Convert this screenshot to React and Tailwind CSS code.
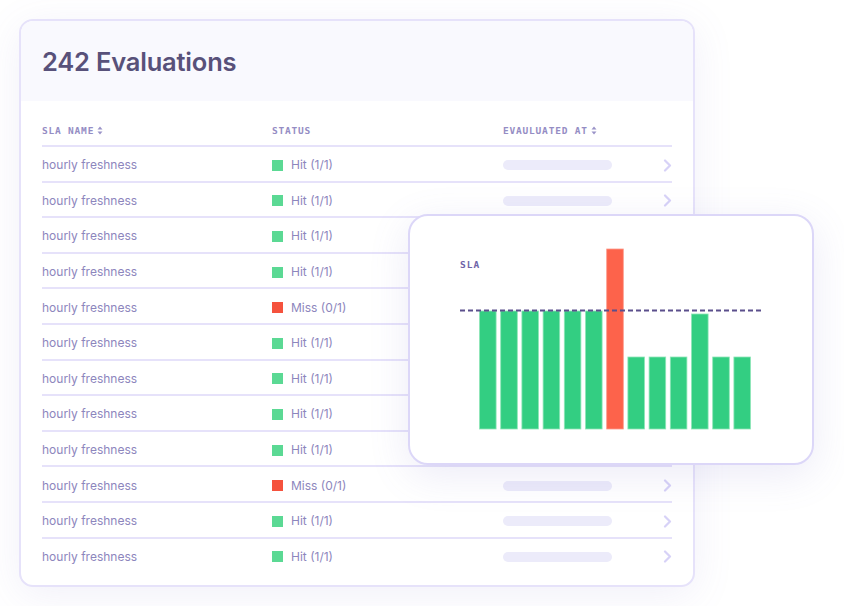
import React from 'react';

const rows = [
  'hit', 'hit', 'hit', 'hit', 'miss', 'hit', 'hit', 'hit', 'hit', 'miss', 'hit', 'hit',
];

const bars = [
  { top: 311, red: false },
  { top: 311, red: false },
  { top: 311, red: false },
  { top: 311, red: false },
  { top: 311, red: false },
  { top: 311, red: false },
  { top: 249, red: true },
  { top: 357, red: false },
  { top: 357, red: false },
  { top: 357, red: false },
  { top: 314, red: false },
  { top: 357, red: false },
  { top: 357, red: false },
];

function SortIcon() {
  return (
    <svg width="6" height="9" viewBox="0 0 6 9" className="ml-[3px] inline-block">
      <path d="M3 0.5L5.5 3.5H0.5Z" fill="#9a93c8" />
      <path d="M3 8.5L5.5 5.5H0.5Z" fill="#9a93c8" />
    </svg>
  );
}

function Chevron() {
  return (
    <svg width="9" height="13" viewBox="0 0 9 13">
      <path d="M2 1.5L7 6.5L2 11.5" fill="none" stroke="#d7d2f7" strokeWidth="2.2" strokeLinecap="round" strokeLinejoin="round" />
    </svg>
  );
}

function Chart() {
  return (
    <svg width="402" height="247" viewBox="0 0 402 247">
      {bars.map((b, i) => {
        const x = 69.5 + i * 21.2;
        const y = b.top - 216;
        return (
          <rect
            key={i}
            x={x}
            y={y}
            width={16.6}
            height={429 - b.top}
            fill={b.red ? '#fd634b' : '#33ce82'}
            stroke={b.red ? '#fd9a8a' : '#8ee6b7'}
            strokeWidth="0.8"
          />
        );
      })}
      <line x1="50" y1="94.5" x2="353" y2="94.5" stroke="#5b4f8c" strokeWidth="1.8" strokeDasharray="5 3" />
    </svg>
  );
}

export default function App() {
  return (
    <div className="relative w-[844px] h-[606px] bg-white overflow-hidden" style={{ fontFamily: 'Inter, "Noto Sans", sans-serif' }}>
      <div className="pl-[19px] pt-[19px]">
        <div className="w-[676px] h-[568px] rounded-[14px] border-2 border-[#e6e2fa] bg-white overflow-hidden shadow-[0_8px_40px_rgba(120,110,200,0.10)]">
          <div className="h-[80px] bg-[#f9f9fe] px-[21px] flex items-center">
            <h1 className="text-[25.5px] font-semibold text-[#58517a] tracking-[-0.2px] leading-none mt-[1px]">242 Evaluations</h1>
          </div>
          <div className="px-[21px]">
            <div
              className="h-[44px] flex items-end pb-[7px] text-[9.5px] font-bold tracking-[0.8px] text-[#958dc4]"
              style={{ fontFamily: '"DejaVu Sans Mono", "Liberation Mono", monospace' }}
            >
              <div className="w-[230px] flex items-center">SLA NAME<SortIcon /></div>
              <div className="w-[231px]">STATUS</div>
              <div className="flex items-center">EVAULUATED AT<SortIcon /></div>
            </div>
            {rows.map((r, i) => (
              <div key={i} className="h-[35.6px] border-t-2 border-[#e6e2fa] flex items-center text-[12px] text-[#8d86bd] pt-[3px]">
                <div className="w-[230px]">hourly freshness</div>
                <div className="w-[231px] flex items-center">
                  <span className={r === 'hit' ? 'w-[11px] h-[11px] bg-[#5bd994] mr-[8px]' : 'w-[11px] h-[11px] bg-[#f5523d] mr-[8px]'} />
                  {r === 'hit' ? 'Hit (1/1)' : 'Miss (0/1)'}
                </div>
                <div className="flex-1 flex items-center">
                  <div className="w-[109px] h-[10px] rounded-full bg-[#ecebfa]" />
                  <div className="ml-auto"><Chevron /></div>
                </div>
              </div>
            ))}
          </div>
        </div>
      </div>

      <div className="absolute left-[408px] top-[214px] w-[406px] h-[251px] rounded-[20px] border-2 border-[#dcd7f8] bg-white shadow-[0_10px_40px_rgba(120,110,200,0.14)] overflow-hidden">
        <div className="absolute left-0 top-0">
          <Chart />
        </div>
        <div
          className="absolute left-[50px] top-[42px] text-[9.5px] font-bold tracking-[1px] text-[#6f64a8]"
          style={{ fontFamily: '"DejaVu Sans Mono", "Liberation Mono", monospace' }}
        >
          SLA
        </div>
      </div>
    </div>
  );
}
